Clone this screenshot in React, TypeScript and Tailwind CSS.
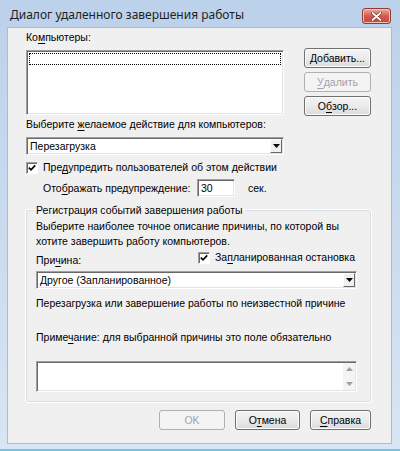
import React from "react";

// Win7 "Remote Shutdown Dialog" mock

const K: React.FC<{ c: string }> = ({ c }) => <span className="underline underline-offset-[2px]">{c}</span>;

const Btn: React.FC<{ w: string; disabled?: boolean; children: React.ReactNode }> = ({ w, disabled, children }) => (
  <div
    className={`flex h-[20px] shrink-0 items-center justify-center rounded-[3px] border ${w} ${
      disabled
        ? "border-[#adb2b5] bg-[#f4f4f4] text-[#a3a3a3]"
        : "border-[#707070] bg-gradient-to-b from-[#f3f3f3] via-[#ebebeb] to-[#dbdbdb] shadow-[inset_0_0_0_1px_#fcfcfc]"
    }`}
  >
    {children}
  </div>
);

const Sunken: React.FC<{ className?: string; children?: React.ReactNode }> = ({ className = "", children }) => (
  <div
    className={`border border-t-[#a0a0a0] border-l-[#a0a0a0] border-r-white border-b-white bg-white shadow-[inset_1px_1px_0_#696969,inset_-1px_-1px_0_#e3e3e3] ${className}`}
  >
    {children}
  </div>
);

const Arrow: React.FC<{ up?: boolean; color?: string }> = ({ up, color = "#000" }) => (
  <svg width="7" height="4" viewBox="0 0 7 4">
    <path d={up ? "M0 4 L3.5 0 L7 4 Z" : "M0 0 L7 0 L3.5 4 Z"} fill={color} />
  </svg>
);

const Combo: React.FC<{ w: string; value: string }> = ({ w, value }) => (
  <Sunken className={`flex h-[18px] items-stretch p-[1px] ${w}`}>
    <div className="flex flex-1 items-center pl-[2px]">{value}</div>
    <div className="flex w-[12px] items-center justify-center border border-t-white border-l-white border-r-[#696969] border-b-[#696969] bg-[#f0f0f0]">
      <Arrow />
    </div>
  </Sunken>
);

const Check: React.FC = () => (
  <div className="flex h-[12px] w-[12px] shrink-0 items-center justify-center border border-t-[#a0a0a0] border-l-[#a0a0a0] border-r-white border-b-white bg-white shadow-[inset_1px_1px_0_#696969]">
    <svg width="8" height="8" viewBox="0 0 8 8">
      <polyline points="0.8,3.6 3,5.8 7.2,1.4" fill="none" stroke="#000" strokeWidth="1.7" />
    </svg>
  </div>
);

export default function App() {
  return (
    <div className="flex h-[451px] w-[400px] flex-col whitespace-nowrap bg-gradient-to-b from-[#bcd1ea] to-[#d8e5f3] font-['Liberation_Sans',sans-serif] text-[10.5px] leading-[13px] text-black">
      {/* title bar */}
      <div className="flex h-[27px] shrink-0 items-start pl-[10px] pr-[9px]">
        <div className="mt-[7px] font-['Noto_Sans',sans-serif] text-[12px] leading-[16px] text-[#1e1e1e]">
          Диалог удаленного завершения работы
        </div>
        <div className="ml-auto mt-[8px] flex h-[16px] w-[29px] items-center justify-center rounded-[3px] border border-[#8d3b35] bg-gradient-to-b from-[#e8aba2] via-[#d2594d] to-[#c8493b] shadow-[inset_0_0_0_1px_#eec3bb]">
          <svg width="11" height="9" viewBox="0 0 11 9">
            <path d="M1.5 1 L9.5 8 M9.5 1 L1.5 8" stroke="#6b2a25" strokeWidth="3" strokeLinecap="round" />
            <path d="M1.5 1 L9.5 8 M9.5 1 L1.5 8" stroke="#fff" strokeWidth="1.8" strokeLinecap="round" />
          </svg>
        </div>
      </div>

      {/* client area */}
      <div className="mb-[5px] ml-[7px] mr-[8px] flex flex-1 flex-col border border-[#a9bcd3] bg-[#f0f0f0] pl-[18px] pr-[20px] pt-[3px]">
        <div>
          Ко<K c="м" />пьютеры:
        </div>

        <div className="mt-[4px] flex items-start">
          <Sunken className="mt-[2px] h-[65px] w-[258px] p-[2px]">
            <div className="h-[12px] w-full border border-dotted border-black" />
          </Sunken>
          <div className="ml-auto flex flex-col gap-[4px]">
            <Btn w="w-[67px]">
              <K c="Д" />обавить...
            </Btn>
            <Btn w="w-[67px]" disabled>
              <K c="У" />далить
            </Btn>
            <Btn w="w-[67px]">
              О<K c="б" />зор...
            </Btn>
          </div>
        </div>

        <div className="mt-[2px]">
          Выберите <K c="ж" />елаемое действие для компьютеров:
        </div>
        <div className="mt-[6px]">
          <Combo w="w-[258px]" value="Перезагрузка" />
        </div>

        <div className="mt-[6px] flex items-center gap-[5px]">
          <Check />
          <div>
            Пре<K c="д" />упредить пользователей об этом действии
          </div>
        </div>

        <div className="mt-[5px] flex items-center pl-[17px]">
          <div className="w-[154px]">
            Ото<K c="б" />ражать предупреждение:
          </div>
          <Sunken className="flex h-[18px] w-[38px] items-center pl-[3px]">30</Sunken>
          <div className="ml-[13px]">сек.</div>
        </div>

        <fieldset className="mt-[7px] rounded-[3px] border border-[#d5dfe5] pb-[9px] pl-[9px] pr-[13px] shadow-[0_0_0_1px_#fff]">
          <legend className="-ml-[2px] px-[2px]">Регистрация событий завершения работы</legend>
          <div className="mt-[2px] leading-[15px]">
            Выберите наиболее точное описание причины, по которой вы
            <br />
            хотите завершить работу компьютеров.
          </div>

          <div className="mt-[2px] flex items-start">
            <div className="mt-[3px] w-[162px]">
              При<K c="ч" />ина:
            </div>
            <div className="flex items-center gap-[5px]">
              <Check />
              <div>
                За<K c="п" />ланированная остановка
              </div>
            </div>
          </div>

          <div className="mt-[4px]">
            <Combo w="w-full" value="Другое (Запланированное)" />
          </div>

          <div className="mt-[8px]">Перезагрузка или завершение работы по неизвестной причине</div>

          <div className="mt-[21px]">
            Приме<K c="ч" />ание: для выбранной причины это поле обязательно
          </div>

          <Sunken className="mt-[17px] flex h-[31px] w-full justify-end p-[1px]">
            <div className="flex w-[12px] flex-col items-center justify-between bg-[#f4f4f4] py-[4px]">
              <Arrow up color="#a0a0a0" />
              <Arrow color="#a0a0a0" />
            </div>
          </Sunken>
        </fieldset>

        <div className="mt-[8px] flex justify-end gap-[10px]">
          <Btn w="w-[66px]" disabled>
            OK
          </Btn>
          <Btn w="w-[65px]">
            О<K c="т" />мена
          </Btn>
          <Btn w="w-[61px]">
            <K c="С" />правка
          </Btn>
        </div>
      </div>
      <div className="h-[2px] shrink-0 bg-[#6fc6ec]" />
    </div>
  );
}
